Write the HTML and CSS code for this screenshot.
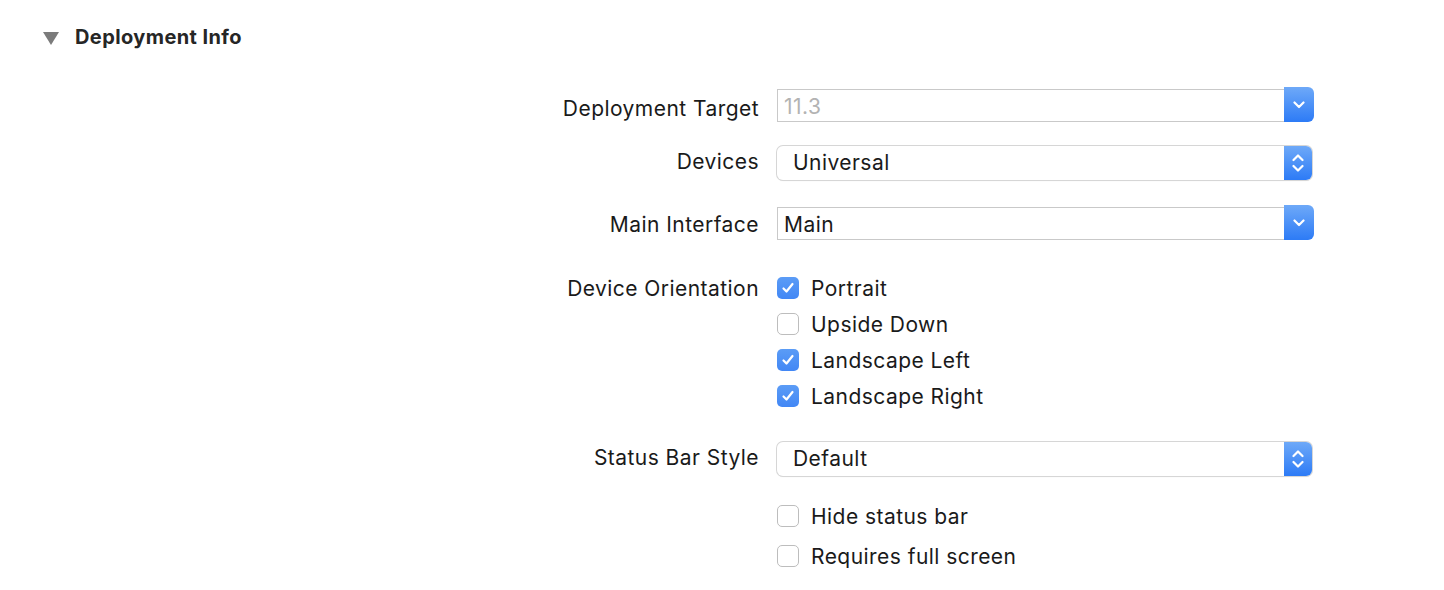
FILE: index.html
```html
<!DOCTYPE html>
<html>
<head>
<meta charset="utf-8">
<link rel="stylesheet" href="styles.css">
</head>
<body>
<div class="section-header">
  <span class="disclosure"></span>
  <span class="section-title">Deployment Info</span>
</div>
<div class="form">
  <div class="row row-target">
    <div class="label label-combo label-target">Deployment Target</div>
    <div class="control">
      <div class="combo">
        <div class="combo-field placeholder">11.3</div>
        <div class="blue-btn combo-btn">
          <svg width="12" height="8" viewBox="0 0 12 8"><path d="M1.5 1.5 L6 6 L10.5 1.5" fill="none" stroke="#fff" stroke-width="2.2" stroke-linecap="round" stroke-linejoin="round"/></svg>
        </div>
      </div>
    </div>
  </div>
  <div class="row row-devices">
    <div class="label">Devices</div>
    <div class="control">
      <div class="popup">
        <div class="popup-field">Universal</div>
        <div class="blue-btn popup-btn">
          <svg width="12" height="20" viewBox="0 0 12 20"><path d="M1.5 7 L6 2.5 L10.5 7 M1.5 13 L6 17.5 L10.5 13" fill="none" stroke="#fff" stroke-width="2.2" stroke-linecap="round" stroke-linejoin="round"/></svg>
        </div>
      </div>
    </div>
  </div>
  <div class="row row-main">
    <div class="label label-combo">Main Interface</div>
    <div class="control">
      <div class="combo">
        <div class="combo-field">Main</div>
        <div class="blue-btn combo-btn">
          <svg width="12" height="8" viewBox="0 0 12 8"><path d="M1.5 1.5 L6 6 L10.5 1.5" fill="none" stroke="#fff" stroke-width="2.2" stroke-linecap="round" stroke-linejoin="round"/></svg>
        </div>
      </div>
    </div>
  </div>
  <div class="row row-orient">
    <div class="label label-orient">Device Orientation</div>
    <div class="control checks">
      <label class="check"><span class="box on"><svg width="14" height="12" viewBox="0 0 14 12"><path d="M2.5 6.5 L5.5 9.5 L11.5 2" fill="none" stroke="#fff" stroke-width="2.2" stroke-linecap="round" stroke-linejoin="round"/></svg></span>Portrait</label>
      <label class="check"><span class="box"></span>Upside Down</label>
      <label class="check"><span class="box on"><svg width="14" height="12" viewBox="0 0 14 12"><path d="M2.5 6.5 L5.5 9.5 L11.5 2" fill="none" stroke="#fff" stroke-width="2.2" stroke-linecap="round" stroke-linejoin="round"/></svg></span>Landscape Left</label>
      <label class="check"><span class="box on"><svg width="14" height="12" viewBox="0 0 14 12"><path d="M2.5 6.5 L5.5 9.5 L11.5 2" fill="none" stroke="#fff" stroke-width="2.2" stroke-linecap="round" stroke-linejoin="round"/></svg></span>Landscape Right</label>
    </div>
  </div>
  <div class="row row-status">
    <div class="label">Status Bar Style</div>
    <div class="control">
      <div class="popup">
        <div class="popup-field">Default</div>
        <div class="blue-btn popup-btn">
          <svg width="12" height="20" viewBox="0 0 12 20"><path d="M1.5 7 L6 2.5 L10.5 7 M1.5 13 L6 17.5 L10.5 13" fill="none" stroke="#fff" stroke-width="2.2" stroke-linecap="round" stroke-linejoin="round"/></svg>
        </div>
      </div>
    </div>
  </div>
  <div class="row row-extra">
    <div class="label"></div>
    <div class="control checks checks-wide">
      <label class="check"><span class="box"></span>Hide status bar</label>
      <label class="check"><span class="box"></span>Requires full screen</label>
    </div>
  </div>
</div>
</body>
</html>
```
FILE: styles.css
```css
html, body {
  margin: 0;
  padding: 0;
  background: #ffffff;
}
body {
  width: 1444px;
  height: 590px;
  overflow: hidden;
  font-family: "Inter", "Liberation Sans", sans-serif;
  color: #1d1d1d;
}
.section-header {
  display: flex;
  align-items: center;
  height: 24px;
  margin-top: 25px;
  padding-left: 43px;
}
.disclosure {
  width: 0;
  height: 0;
  border-left: 8.5px solid transparent;
  border-right: 8.5px solid transparent;
  border-top: 13px solid #7b7b7b;
  margin-right: 15px;
  margin-top: 2px;
}
.section-title {
  font-weight: 700;
  font-size: 20px;
  color: #262626;
  letter-spacing: 0.4px;
  margin-left: 1px;
}
.form {
  display: flex;
  flex-direction: column;
  padding-top: 38px;
}
.row {
  display: flex;
  align-items: flex-start;
}
.label {
  width: 759px;
  flex: none;
  box-sizing: border-box;
  height: 34px;
  text-align: right;
  font-size: 21px;
  letter-spacing: 0.45px;
  line-height: 34px;
  color: #1a1a1a;
}
.label-combo {
  height: 35px;
  padding-top: 3px;
}
.label-target {
  padding-top: 5px;
}
.label-orient {
  padding-top: 2px;
}
.control {
  margin-left: 18px;
}
.row-devices { margin-top: 23px; }
.row-main { margin-top: 25px; }
.row-orient { margin-top: 30px; }
.row-status { margin-top: 27px; }
.row-extra { margin-top: 20px; }
.combo {
  display: flex;
  width: 537px;
  height: 35px;
}
.combo-field {
  flex: 1;
  margin-top: 2px;
  border: 1px solid #c9c9c9;
  border-right: none;
  box-sizing: border-box;
  height: 33px;
  padding-left: 6px;
  font-size: 21px;
  letter-spacing: 0.45px;
  line-height: 33px;
  color: #1a1a1a;
}
.placeholder {
  color: #b3b3b3;
}
.blue-btn {
  display: flex;
  align-items: center;
  justify-content: center;
  background: linear-gradient(#6ea9f8, #2d7bf6);
}
.combo-btn {
  width: 30px;
  height: 35px;
  border-radius: 0 6px 6px 0;
}
.popup {
  display: flex;
  width: 535px;
  height: 34px;
  margin-top: 1px;
  border-radius: 6px;
  box-shadow: 0 0 0 1px #d6d6d6, 0 1px 1px rgba(0,0,0,0.12);
  background: #fff;
}
.popup-field {
  flex: 1;
  padding-left: 16px;
  font-size: 21px;
  letter-spacing: 0.45px;
  line-height: 34px;
  color: #1a1a1a;
}
.popup-btn {
  width: 28px;
  height: 34px;
  border-radius: 0 6px 6px 0;
}
.checks {
  display: flex;
  flex-direction: column;
}
.check {
  display: flex;
  align-items: center;
  height: 36px;
  font-size: 21px;
  letter-spacing: 0.45px;
  color: #1a1a1a;
}
.checks-wide .check {
  height: 40px;
}
.box {
  width: 22px;
  height: 22px;
  box-sizing: border-box;
  border: 1px solid #bdbdbd;
  border-radius: 5px;
  background: #fff;
  margin-right: 12px;
  display: flex;
  align-items: center;
  justify-content: center;
  flex: none;
}
.box.on {
  border: none;
  background: linear-gradient(#5b9cf6, #4287f5);
}
```
